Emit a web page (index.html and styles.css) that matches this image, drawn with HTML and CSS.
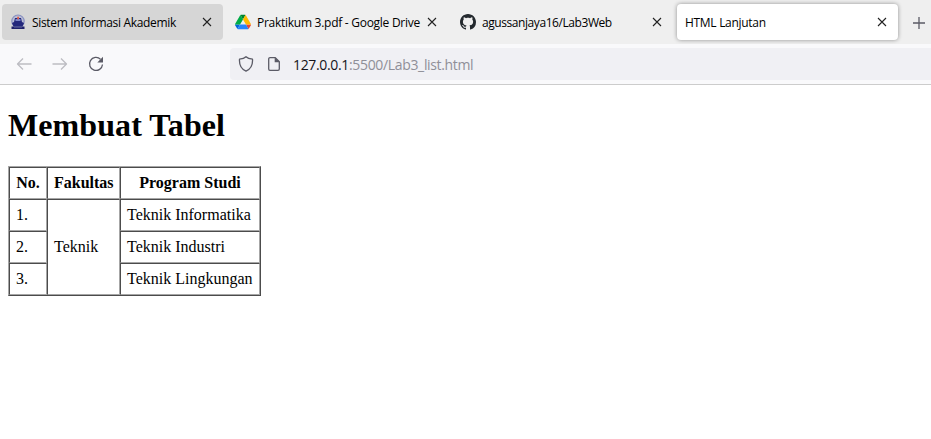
FILE: index.html
```html
<!DOCTYPE html>
<html lang="id">
<head>
<meta charset="utf-8">
<title>HTML Lanjutan</title>
<link rel="stylesheet" href="styles.css">
</head>
<body>
<div class="tabs">
  <div class="tab hovered">
    <svg class="favicon" viewBox="0 0 16 16">
      <circle cx="8" cy="7.200" r="6.200" fill="#b9bdd6" stroke="#8a92c0" stroke-width="1.200"/>
      <path d="M5 4h6l1 4 2 1-1.500 3.500h-9L2 9l2-1z" fill="#24287c"/>
      <path d="M5.500 5h5v2h-5z" fill="#7c86c8"/>
      <path d="M7.200 2.800h1.800v2.400H7.200z" fill="#e0604c"/>
      <path d="M1.500 12.500h13V15h-13z" fill="#20226c"/>
      <path d="M4 13.200h8" stroke="#6870a8" stroke-width=".7"/>
    </svg>
    <span class="label t1">Sistem Informasi Akademik</span>
    <svg class="close" viewBox="0 0 10 10"><path d="M1 1l8 8M9 1l-8 8"/></svg>
  </div>
  <div class="tab">
    <svg class="favicon" viewBox="0 0 87.300 78">
      <path fill="#0066da" d="M6.600 66.850l3.850 6.650c.8 1.400 1.950 2.500 3.300 3.300l13.750-23.800H0c0 1.550.4 3.100 1.200 4.500z"/>
      <path fill="#00ac47" d="M43.650 25L29.900 1.200c-1.350.8-2.500 1.900-3.300 3.300L1.200 48.500A9 9 0 0 0 0 53h27.500z"/>
      <path fill="#ea4335" d="M73.550 76.800c1.350-.8 2.500-1.900 3.300-3.300l1.600-2.750L86.100 57.500c.8-1.400 1.200-2.950 1.200-4.500H59.800l5.850 11.500z"/>
      <path fill="#00832d" d="M43.650 25L57.400 1.200C56.050.4 54.500 0 52.900 0H34.400c-1.600 0-3.150.45-4.500 1.200z"/>
      <path fill="#2684fc" d="M59.800 53H27.500L13.750 76.800c1.350.8 2.900 1.200 4.500 1.200h50.800c1.600 0 3.150-.45 4.500-1.200z"/>
      <path fill="#ffba00" d="M73.400 26.500L60.700 4.500c-.8-1.400-1.950-2.500-3.300-3.300L43.650 25 59.800 53h27.450c0-1.550-.4-3.100-1.200-4.500z"/>
    </svg>
    <span class="label t2">Praktikum 3.pdf - Google Drive</span>
    <svg class="close" viewBox="0 0 10 10"><path d="M1 1l8 8M9 1l-8 8"/></svg>
  </div>
  <div class="tab">
    <svg class="favicon" viewBox="0 0 16 16"><path fill="#24292e" fill-rule="evenodd" d="M8 0C3.580 0 0 3.580 0 8c0 3.540 2.290 6.530 5.470 7.590.4.070.55-.17.55-.38 0-.19-.01-.82-.01-1.490-2.010.37-2.530-.49-2.690-.94-.09-.23-.48-.94-.82-1.130-.28-.15-.68-.52-.01-.53.63-.01 1.080.58 1.230.82.72 1.210 1.870.87 2.330.66.07-.52.28-.87.51-1.070-1.780-.2-3.640-.89-3.640-3.950 0-.87.31-1.590.82-2.150-.08-.2-.36-1.020.08-2.120 0 0 .67-.21 2.200.82.64-.18 1.320-.27 2-.27s1.360.09 2 .27c1.530-1.040 2.200-.82 2.200-.82.44 1.100.16 1.920.08 2.120.51.56.82 1.270.82 2.150 0 3.070-1.870 3.750-3.650 3.950.29.25.54.73.54 1.480 0 1.070-.01 1.930-.01 2.200 0 .21.15.46.55.38A8.010 8.010 0 0 0 16 8c0-4.420-3.580-8-8-8z"/></svg>
    <span class="label t3">agussanjaya16/Lab3Web</span>
    <svg class="close" viewBox="0 0 10 10"><path d="M1 1l8 8M9 1l-8 8"/></svg>
  </div>
  <div class="tab active">
    <span class="label t4">HTML Lanjutan</span>
    <svg class="close" viewBox="0 0 10 10"><path d="M1 1l8 8M9 1l-8 8"/></svg>
  </div>
  <svg class="plus" viewBox="0 0 12 12"><path d="M6 0v12M0 6h12"/></svg>
</div>
<div class="toolbar">
  <svg class="nav off" viewBox="0 0 16 16"><path d="M15.500 8H1.500M7 2.500L1.500 8 7 13.500"/></svg>
  <svg class="nav off" viewBox="0 0 16 16"><path d="M.5 8h14M9 2.500L14.500 8 9 13.500"/></svg>
  <svg class="nav" viewBox="0 0 16 16"><path d="M12.500 3.200A6.500 6.500 0 1 0 14.500 8.500"/><path class="solid" d="M15 .8v5.700H9.300z"/></svg>
  <div class="urlbar">
    <svg class="site" viewBox="0 0 16 16"><path d="M8 .8C9.500 2.300 12 3 14.500 3.200 14.900 9 12.500 13.300 8 15.200 3.500 13.300 1.100 9 1.500 3.200 4 3 6.500 2.300 8 .8z"/></svg>
    <svg class="site" viewBox="0 0 16 16"><path d="M4 1.700h5.300l4 4V13a1.300 1.300 0 0 1-1.300 1.300H4A1.300 1.300 0 0 1 2.700 13V3A1.300 1.300 0 0 1 4 1.700z"/><path class="solid" d="M8.700 1.200L13.800 6.300H8.700z"/></svg>
    <span class="url"><b>127.0.0.1</b>:5500/Lab3_list.html</span>
  </div>
</div>
<main>
  <h1>Membuat Tabel</h1>
  <table>
    <colgroup><col class="c1"><col class="c2"><col class="c3"></colgroup>
    <tr><th>No.</th><th>Fakultas</th><th>Program Studi</th></tr>
    <tr><td>1.</td><td rowspan="3">Teknik</td><td>Teknik Informatika</td></tr>
    <tr><td>2.</td><td>Teknik Industri</td></tr>
    <tr><td>3.</td><td>Teknik Lingkungan</td></tr>
  </table>
</main>
</body>
</html>
```
FILE: styles.css
```css
* { box-sizing: border-box; }
body {
  margin: 0;
  height: 439px;
  overflow: hidden;
  background: #fff;
  color: #000;
}
svg { display: block; flex: none; }
.tabs {
  display: flex;
  align-items: flex-start;
  gap: 4px;
  height: 44px;
  padding: 4px 0 0 2px;
  background: #efefef;
  overflow: hidden;
  font: 12px/16px "Open Sans", sans-serif;
}
.tab {
  display: flex;
  flex: none;
  align-items: center;
  width: 221px;
  height: 36px;
  padding: 0 11px 0 8px;
  border-radius: 4px;
}
.tab.hovered { background: #d6d6d6; }
.tab.active {
  background: #fff;
  box-shadow: 0 0 4px rgba(0, 0, 0, .4);
}
.favicon { width: 16px; height: 16px; margin-right: 6px; }
.label { padding-top: 2px; white-space: nowrap; }
.t1 { letter-spacing: -.33px; }
.t2 { letter-spacing: -.27px; }
.t3 { letter-spacing: -.43px; }
.t4 { letter-spacing: -.3px; }
.close { width: 10px; height: 10px; margin-left: auto; }
.close path { fill: none; stroke: #222; stroke-width: 1.1; }
.plus { width: 12px; height: 12px; margin: 13px 0 0 11px; }
.plus path { fill: none; stroke: #5b5b66; stroke-width: 1.3; }
.toolbar {
  display: flex;
  align-items: center;
  height: 41px;
  padding: 0 0 1px 16px;
  background: #f9f9fb;
  border-bottom: 1px solid #ccc;
}
.nav { width: 16px; height: 16px; margin-right: 20px; }
.nav path, .site path { fill: none; stroke: #5b5b66; stroke-width: 1.3; stroke-linejoin: round; }
.nav .solid, .site .solid { fill: #5b5b66; stroke: none; }
.nav.off path { stroke: #bdbdc2; }
.urlbar {
  display: flex;
  flex: 1;
  align-items: center;
  height: 32px;
  margin-left: 106px;
  padding-left: 8px;
  background: #f0f0f4;
  border-radius: 4px 0 0 4px;
}
.site { width: 16px; height: 16px; margin-right: 12px; }
.url {
  margin-left: -1px;
  padding-top: 2px;
  color: #8f8f98;
  font: 14px/20px "Open Sans", sans-serif;
  letter-spacing: -.34px;
  white-space: nowrap;
}
.url b { color: #15141a; font-weight: 400; }
main { padding: 22px 8px 0; font: 16px/18px "Liberation Serif", serif; }
h1 { margin: 0 0 22px; font-size: 32px; line-height: 37px; letter-spacing: .08px; }
table {
  width: 253px;
  table-layout: fixed;
  border-collapse: separate;
  border-spacing: 0;
  border: 1px solid;
  border-color: #a6a6a6 #4c4c4c #4c4c4c #a6a6a6;
}
.c1 { width: 38px; }
.c2 { width: 73px; }
.c3 { width: 140px; }
th, td {
  height: 32px;
  padding: 0 6px;
  border: 1px solid;
  border-color: #4c4c4c #a6a6a6 #a6a6a6 #4c4c4c;
  text-align: left;
  white-space: nowrap;
}
th { text-align: center; }
```
